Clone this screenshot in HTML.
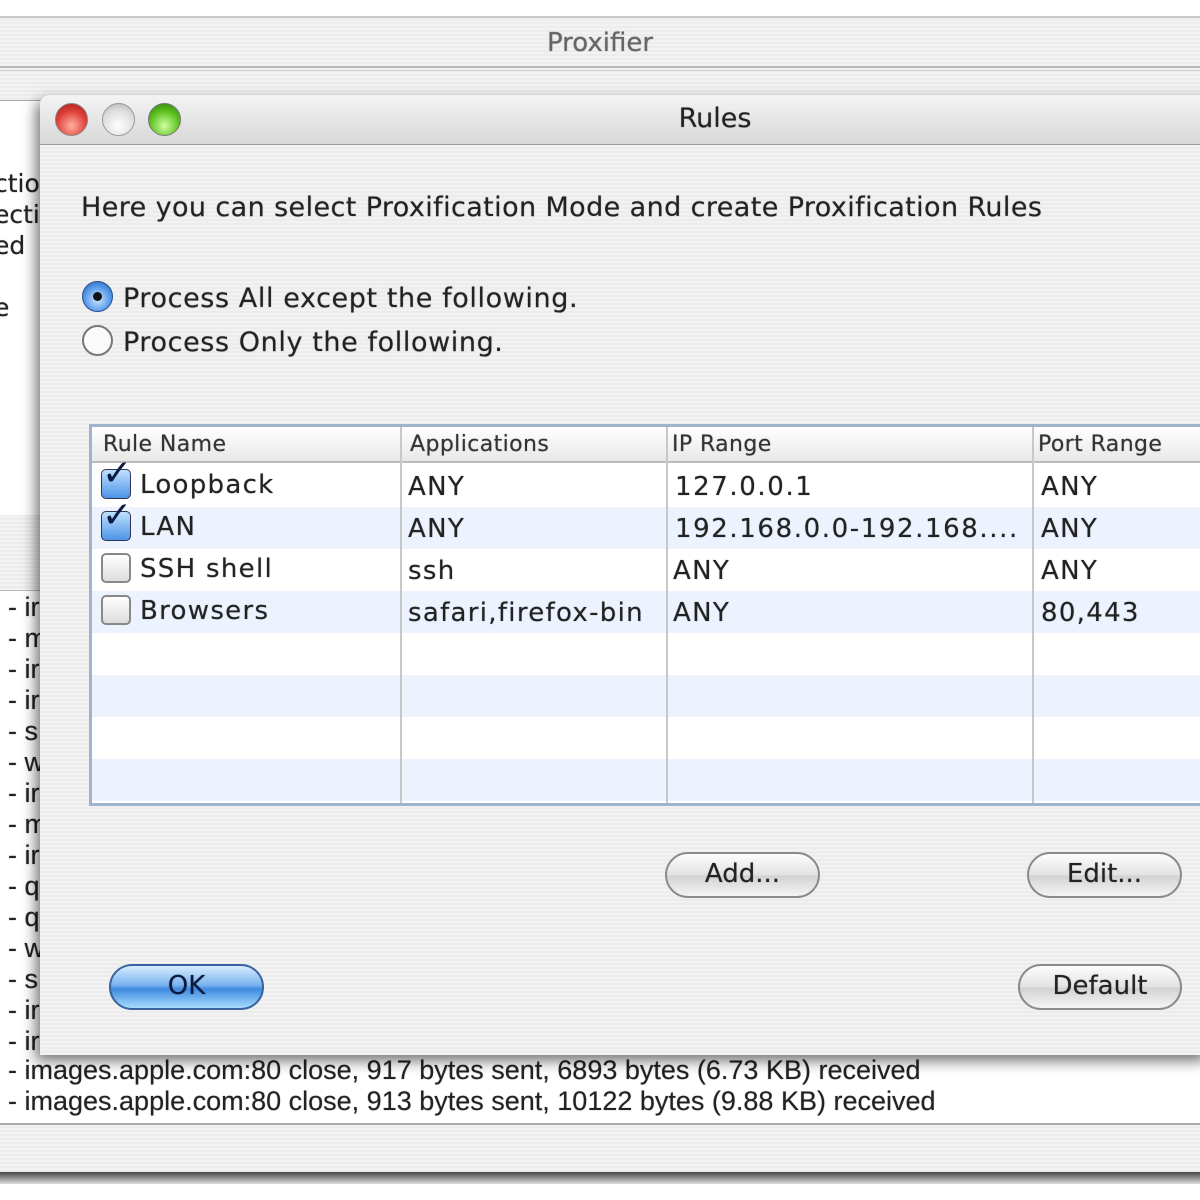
<!DOCTYPE html>
<html><head><meta charset="utf-8"><style>
*{margin:0;padding:0;box-sizing:border-box}
body{width:1200px;height:1200px;overflow:hidden;background:#fff;position:relative;font-family:"Liberation Sans","DejaVu Sans",sans-serif;color:#111}
.abs{position:absolute}
.ui{font-family:"DejaVu Sans","Liberation Sans",sans-serif;text-shadow:0 0 1px rgba(0,0,0,.5)}
.log{font-size:27px;color:#222;white-space:nowrap;left:8px;text-shadow:0 0 1px rgba(0,0,0,.5)}
.stripe{background:repeating-linear-gradient(#ececec 0 2px,#f2f2f2 2px 4px)}
.btn{position:absolute;border:2px solid #8a8a8a;border-radius:24px;background:linear-gradient(#fdfdfd,#e2e2e2 50%,#d2d2d2 52%,#f4f4f4);font-size:26px;text-align:center;line-height:40px;color:#222}
.cell{position:absolute;font-size:26px;color:#222;letter-spacing:1.3px;white-space:nowrap}
</style></head><body>
<div class="abs stripe" style="left:0;top:16px;width:1200px;height:1160px;border-top:2px solid #c8c8c8"></div>
<div class="abs ui" style="left:0;top:28px;width:1200px;text-align:center;font-size:26px;color:#666">Proxifier</div>
<div class="abs" style="left:0;top:66px;width:1200px;height:5px;border-top:2px solid #b8b8b8;border-bottom:1px solid #ccc"></div>
<div class="abs" style="left:0;top:100px;width:40px;height:415px;background:#fff;border-top:1px solid #aaa"></div>
<div class="abs ui" style="left:-6px;top:168px;font-size:25px;line-height:31px;color:#222">ctior<br>ectic<br>ed<br><br>e</div>
<div class="abs" style="left:0;top:590px;width:1200px;height:535px;background:#fff;border-top:1px solid #bbb;border-bottom:2px solid #aaa"></div>
<div class="abs log" style="top:592px;line-height:31px">- ir<br>- m<br>- ir<br>- ir<br>- s<br>- w<br>- ir<br>- m<br>- ir<br>- q<br>- q<br>- w<br>- s<br>- ir<br>- ir</div>
<div class="abs log" style="top:1055px;line-height:31px">- images.apple.com:80 close, 917 bytes sent, 6893 bytes (6.73 KB) received<br>- images.apple.com:80 close, 913 bytes sent, 10122 bytes (9.88 KB) received</div>
<div class="abs" style="left:0;top:1172px;width:1200px;height:12px;background:linear-gradient(#444,#ddd)"></div>
<div class="abs stripe" style="left:40px;top:95px;width:1170px;height:960px;border-radius:10px 0 0 0;box-shadow:-4px 6px 14px rgba(0,0,0,.55)"></div>
<div class="abs" style="left:40px;top:95px;width:1170px;height:50px;border-radius:10px 0 0 0;background:linear-gradient(#f4f4f4,#d8d8d8);border-bottom:1px solid #999"></div>
<div class="abs ui" style="left:40px;top:103px;width:1350px;text-align:center;font-size:27px;color:#222">Rules</div>
<div class="abs" style="left:55px;top:103px;width:33px;height:33px;border-radius:50%;background:radial-gradient(circle at 50% 70%,#ffb0a0,#e0403a 55%,#a01810);border:1px solid #888"></div>
<div class="abs" style="left:102px;top:103px;width:33px;height:33px;border-radius:50%;background:radial-gradient(circle at 50% 70%,#fff,#ddd 60%,#aaa);border:1px solid #999"></div>
<div class="abs" style="left:148px;top:103px;width:33px;height:33px;border-radius:50%;background:radial-gradient(circle at 50% 70%,#d0ffa0,#5cc020 55%,#2a7a08);border:1px solid #777"></div>
<div class="abs ui" style="left:81px;top:192px;font-size:27px;letter-spacing:0.4px;color:#222;white-space:nowrap">Here you can select Proxification Mode and create Proxification Rules</div>
<div class="abs" style="left:82px;top:281px;width:31px;height:31px;border-radius:50%;background:radial-gradient(circle at 50% 60%,#cfe6ff,#4d94e6 60%,#2a5ea8);border:1px solid #2a4f8a"></div>
<div class="abs" style="left:93px;top:292px;width:9px;height:9px;border-radius:50%;background:#111"></div>
<div class="abs" style="left:82px;top:325px;width:31px;height:31px;border-radius:50%;background:#fafafa;border:2px solid #777"></div>
<div class="abs ui" style="left:123px;top:277px;font-size:27px;letter-spacing:0.6px;line-height:44px;color:#222">Process All except the following.<br>Process Only the following.</div>
<div class="abs" style="left:89px;top:424px;width:1120px;height:382px;border:3px solid #9fb4cc;background:#fff;overflow:hidden">
 <div class="abs" style="left:0;top:0;width:1120px;height:36px;background:linear-gradient(#fff,#e8e8e8);border-bottom:2px solid #bbb"></div>
 <div class="abs" style="left:0;top:80px;width:1120px;height:42px;background:#edf3fe"></div>
 <div class="abs" style="left:0;top:164px;width:1120px;height:42px;background:#edf3fe"></div>
 <div class="abs" style="left:0;top:248px;width:1120px;height:42px;background:#edf3fe"></div>
 <div class="abs" style="left:0;top:332px;width:1120px;height:42px;background:#edf3fe"></div>
 <div class="abs" style="left:308px;top:0;width:2px;height:382px;background:#c8c8c8"></div>
 <div class="abs" style="left:574px;top:0;width:2px;height:382px;background:#c8c8c8"></div>
 <div class="abs" style="left:940px;top:0;width:2px;height:382px;background:#c8c8c8"></div>
 <div class="abs ui" style="left:11px;top:5px;font-size:22px;letter-spacing:0.4px;color:#333">Rule Name</div>
 <div class="abs ui" style="left:318px;top:5px;font-size:22px;letter-spacing:0.4px;color:#333">Applications</div>
 <div class="abs ui" style="left:580px;top:5px;font-size:22px;letter-spacing:0.4px;color:#333">IP Range</div>
 <div class="abs ui" style="left:946px;top:5px;font-size:22px;letter-spacing:0.4px;color:#333">Port Range</div>
 <div class="abs" style="left:9px;top:42px;width:30px;height:30px;border-radius:5px;background:linear-gradient(#bfe0ff,#4d94e6);border:1px solid #335"></div>
 <div class="abs" style="left:10px;top:26px;font-size:36px;color:#0a1a40;font-weight:bold;font-family:'DejaVu Sans'">✓</div>
 <div class="abs" style="left:9px;top:84px;width:30px;height:30px;border-radius:5px;background:linear-gradient(#bfe0ff,#4d94e6);border:1px solid #335"></div>
 <div class="abs" style="left:10px;top:68px;font-size:36px;color:#0a1a40;font-weight:bold;font-family:'DejaVu Sans'">✓</div>
 <div class="abs" style="left:9px;top:126px;width:30px;height:30px;border-radius:5px;background:linear-gradient(#fff,#ddd);border:2px solid #888"></div>
 <div class="abs" style="left:9px;top:168px;width:30px;height:30px;border-radius:5px;background:linear-gradient(#fff,#ddd);border:2px solid #888"></div>
 <div class="cell ui" style="left:48px;top:43px">Loopback</div>
 <div class="cell ui" style="left:48px;top:85px">LAN</div>
 <div class="cell ui" style="left:48px;top:127px">SSH shell</div>
 <div class="cell ui" style="left:48px;top:169px">Browsers</div>
 <div class="cell ui" style="left:316px;top:45px">ANY</div>
 <div class="cell ui" style="left:316px;top:87px">ANY</div>
 <div class="cell ui" style="left:316px;top:129px">ssh</div>
 <div class="cell ui" style="left:316px;top:171px">safari,firefox-bin</div>
 <div class="cell ui" style="left:583px;top:45px;letter-spacing:1.6px">127.0.0.1</div>
 <div class="cell ui" style="left:583px;top:87px;letter-spacing:1.6px">192.168.0.0-192.168....</div>
 <div class="cell ui" style="left:581px;top:129px">ANY</div>
 <div class="cell ui" style="left:581px;top:171px">ANY</div>
 <div class="cell ui" style="left:949px;top:45px">ANY</div>
 <div class="cell ui" style="left:949px;top:87px">ANY</div>
 <div class="cell ui" style="left:949px;top:129px">ANY</div>
 <div class="cell ui" style="left:949px;top:171px">80,443</div>
</div>
<div class="btn ui" style="left:665px;top:852px;width:155px;height:46px">Add...</div>
<div class="btn ui" style="left:1027px;top:852px;width:155px;height:46px">Edit...</div>
<div class="btn ui" style="left:1018px;top:964px;width:164px;height:46px">Default</div>
<div class="btn ui" style="left:109px;top:964px;width:155px;height:46px;border-color:#3b62a0;background:linear-gradient(#d8ecff,#7ab4f0 45%,#3f8ae0 55%,#a8dcff);color:#0a1a40">OK</div>
</body></html>
